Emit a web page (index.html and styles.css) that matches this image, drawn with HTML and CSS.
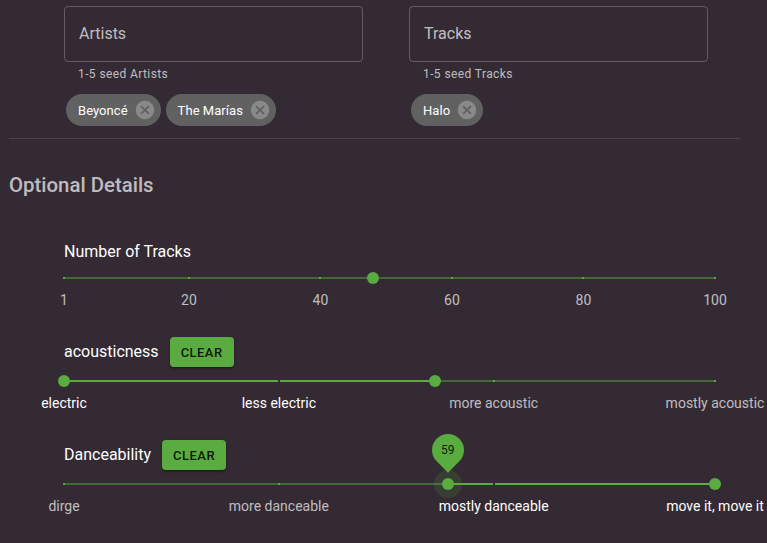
FILE: index.html
```html
<!DOCTYPE html>
<html lang="en">
<head>
<meta charset="utf-8">
<title>Seeds</title>
<link rel="stylesheet" href="styles.css">
</head>
<body>
<main class="page">
  <section class="seeds">
    <div class="seed-col">
      <div class="field"><span class="field-label">Artists</span></div>
      <div class="helper">1-5 seed Artists</div>
      <div class="chips">
        <span class="chip"><span class="chip-label">Beyoncé</span><svg class="chip-del" viewBox="0 0 24 24"><path d="M12 2C6.47 2 2 6.47 2 12s4.47 10 10 10 10-4.47 10-10S17.53 2 12 2zm5 13.59L15.59 17 12 13.41 8.41 17 7 15.59 10.59 12 7 8.41 8.41 7 12 10.59 15.59 7 17 8.41 13.41 12 17 15.59z"/></svg></span>
        <span class="chip"><span class="chip-label">The Marías</span><svg class="chip-del" viewBox="0 0 24 24"><path d="M12 2C6.47 2 2 6.47 2 12s4.47 10 10 10 10-4.47 10-10S17.53 2 12 2zm5 13.59L15.59 17 12 13.41 8.41 17 7 15.59 10.59 12 7 8.41 8.41 7 12 10.59 15.59 7 17 8.41 13.41 12 17 15.59z"/></svg></span>
      </div>
    </div>
    <div class="seed-col">
      <div class="field"><span class="field-label">Tracks</span></div>
      <div class="helper">1-5 seed Tracks</div>
      <div class="chips">
        <span class="chip"><span class="chip-label">Halo</span><svg class="chip-del" viewBox="0 0 24 24"><path d="M12 2C6.47 2 2 6.47 2 12s4.47 10 10 10 10-4.47 10-10S17.53 2 12 2zm5 13.59L15.59 17 12 13.41 8.41 17 7 15.59 10.59 12 7 8.41 8.41 7 12 10.59 15.59 7 17 8.41 13.41 12 17 15.59z"/></svg></span>
      </div>
    </div>
  </section>

  <hr class="divider">

  <h2 class="section-title">Optional Details</h2>

  <section class="options">
    <div class="opt-head plain"><span class="opt-title">Number of Tracks</span></div>
    <div class="slider">
      <div class="rail"></div>
      <span class="mark" style="left:0%"></span>
      <span class="mark" style="left:19.19%"></span>
      <span class="mark" style="left:39.39%"></span>
      <span class="mark" style="left:59.6%"></span>
      <span class="mark" style="left:79.8%"></span>
      <span class="mark" style="left:100%"></span>
      <span class="thumb" style="left:47.47%"></span>
      <span class="mlabel" style="left:0%">1</span>
      <span class="mlabel" style="left:19.19%">20</span>
      <span class="mlabel" style="left:39.39%">40</span>
      <span class="mlabel" style="left:59.6%">60</span>
      <span class="mlabel" style="left:79.8%">80</span>
      <span class="mlabel" style="left:100%">100</span>
    </div>

    <div class="opt-head"><span class="opt-title">acousticness</span><button class="clear">CLEAR</button></div>
    <div class="slider">
      <div class="rail"></div>
      <div class="track" style="left:0%;width:57%"></div>
      <span class="mark active" style="left:33%"></span>
      <span class="mark" style="left:66%"></span>
      <span class="mark" style="left:100%"></span>
      <span class="thumb" style="left:0%"></span>
      <span class="thumb" style="left:57%"></span>
      <span class="mlabel active" style="left:0%">electric</span>
      <span class="mlabel active" style="left:33%">less electric</span>
      <span class="mlabel" style="left:66%">more acoustic</span>
      <span class="mlabel" style="left:100%">mostly acoustic</span>
    </div>

    <div class="opt-head"><span class="opt-title">Danceability</span><button class="clear">CLEAR</button></div>
    <div class="slider">
      <div class="rail"></div>
      <div class="track" style="left:59%;width:41%"></div>
      <span class="mark" style="left:0%"></span>
      <span class="mark" style="left:33%"></span>
      <span class="mark active" style="left:66%"></span>
      <span class="thumb focus" style="left:59%"><span class="value-label"><span class="value-text">59</span></span></span>
      <span class="thumb" style="left:100%"></span>
      <span class="mlabel" style="left:0%">dirge</span>
      <span class="mlabel" style="left:33%">more danceable</span>
      <span class="mlabel active" style="left:66%">mostly danceable</span>
      <span class="mlabel active" style="left:100%">move it, move it</span>
    </div>
  </section>
</main>
</body>
</html>
```

FILE: styles.css
```css
* { box-sizing: border-box; }

html, body {
  margin: 0;
  padding: 0;
  background: #332a33;
  overflow: hidden;
}

body {
  font-family: Roboto, "Noto Sans", "Liberation Sans", sans-serif;
  color: #fff;
  width: 767px;
  height: 543px;
}

.page {
  padding: 6px 0 0 9px;
  width: 740px;
}

.seeds {
  display: flex;
  gap: 46px;
  padding-left: 55px;
}

.seed-col {
  width: 299px;
}

.field {
  height: 56px;
  border: 1px solid rgba(255, 255, 255, 0.23);
  border-radius: 4px;
  display: flex;
  align-items: center;
  padding: 0 14px;
}

.field-label {
  font-size: 16px;
  color: rgba(255, 255, 255, 0.7);
  line-height: 1;
}

.helper {
  margin-top: 2px;
  padding-left: 14px;
  font-size: 12px;
  line-height: 20px;
  letter-spacing: 0.4px;
  color: rgba(255, 255, 255, 0.7);
}

.chips {
  margin-top: 10px;
  display: flex;
  gap: 5px;
  padding-left: 2px;
}

.chip {
  height: 32px;
  border-radius: 16px;
  background: #616161;
  display: inline-flex;
  align-items: center;
  font-size: 13px;
  letter-spacing: 0.05px;
  color: #fff;
}

.chip-label {
  padding: 0 12px;
}

.chip-del {
  width: 22px;
  height: 22px;
  margin: 0 5px 0 -6px;
  fill: rgba(255, 255, 255, 0.26);
}

.divider {
  margin: 12px 0 0 0;
  border: 0;
  height: 1px;
  width: 731px;
  background: rgba(255, 255, 255, 0.12);
}

.section-title {
  margin: 33px 0 0 0;
  font-size: 20.4px;
  line-height: 26px;
  font-weight: 500;
  color: rgba(255, 255, 255, 0.7);
}

.options {
  padding-left: 55px;
  width: 706px;
}

.opt-head {
  display: flex;
  align-items: center;
  height: 30px;
  margin-top: 27px;
}

.opt-head.plain {
  height: 24px;
  margin-top: 42px;
}

.opt-title {
  font-size: 16px;
  line-height: 24px;
  color: #fff;
}

.clear {
  margin-left: 11px;
  height: 30px;
  min-width: 64px;
  padding: 4px 10px;
  border: 0;
  border-radius: 4px;
  background: #5aab40;
  color: rgba(0, 0, 0, 0.87);
  font-family: Roboto, "Noto Sans", "Liberation Sans", sans-serif;
  font-size: 13px;
  font-weight: 500;
  letter-spacing: 0.46px;
  box-shadow: 0 3px 1px -2px rgba(0,0,0,0.2), 0 2px 2px 0 rgba(0,0,0,0.14), 0 1px 5px 0 rgba(0,0,0,0.12);
}

.slider {
  position: relative;
  width: 651px;
  height: 46px;
}

.rail {
  position: absolute;
  left: 0;
  right: 0;
  top: 13px;
  height: 2px;
  background: #44663a;
}

.track {
  position: absolute;
  top: 13px;
  height: 2px;
  background: #5aab40;
}

.mark {
  position: absolute;
  top: 13px;
  width: 2px;
  height: 2px;
  margin-left: -1px;
  background: #5aab40;
}

.mark.active {
  background: #332a33;
}

.thumb {
  position: absolute;
  top: 8px;
  width: 12px;
  height: 12px;
  margin-left: -6px;
  border-radius: 50%;
  background: #5aab40;
}

.thumb.focus {
  box-shadow: 0 0 0 8px rgba(90, 171, 64, 0.16);
}

.value-label {
  position: absolute;
  left: -10px;
  top: -44px;
  width: 32px;
  height: 32px;
  border-radius: 50% 50% 50% 0;
  background: #5aab40;
  transform: rotate(-45deg);
  display: flex;
  align-items: center;
  justify-content: center;
}

.value-text {
  transform: rotate(45deg);
  font-size: 12px;
  color: rgba(0, 0, 0, 0.87);
}

.mlabel {
  position: absolute;
  top: 26px;
  transform: translateX(-50%);
  font-size: 14px;
  line-height: 20px;
  white-space: nowrap;
  color: rgba(255, 255, 255, 0.7);
}

.mlabel.active {
  color: #fff;
}
```
